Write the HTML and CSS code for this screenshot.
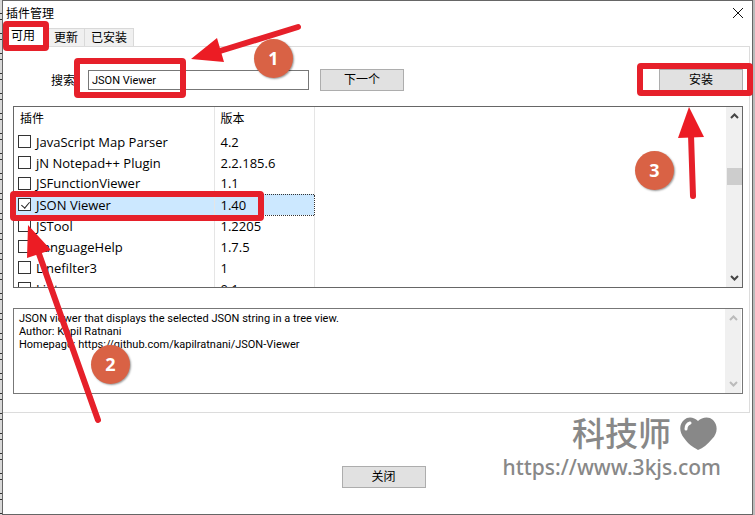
FILE: index.html
```html
<!DOCTYPE html>
<html lang="zh-CN">
<head>
    <meta charset="UTF-8">
    <meta name="viewport" content="width=device-width, initial-scale=1.0">
    <title>插件管理</title>
    <link rel="stylesheet" href="styles.css">
</head>
<body>
    <div class="dialog">
        <header class="title-bar">
            <h1>插件管理</h1>
            <button class="close-icon" aria-label="关闭窗口">
                <svg width="12" height="12" viewBox="0 0 12 12"><path d="M1 1L11 11M11 1L1 11"/></svg>
            </button>
        </header>
        <nav class="tabs">
            <button class="tab active">可用</button>
            <button class="tab">更新</button>
            <button class="tab">已安装</button>
        </nav>
        <main class="panel">
            <div class="search-row">
                <label for="search">搜索:</label>
                <input type="text" id="search" value="JSON Viewer">
                <button class="btn">下一个</button>
                <button class="btn install">安装</button>
            </div>
            <div class="list-box">
                <div class="list-view">
                    <table>
                        <thead>
                            <tr><th class="name">插件</th><th class="version">版本</th><th></th></tr>
                        </thead>
                        <tbody>
                            <tr><td><label><input type="checkbox">JavaScript Map Parser</label></td><td>4.2</td><td></td></tr>
                            <tr><td><label><input type="checkbox">jN Notepad++ Plugin</label></td><td>2.2.185.6</td><td></td></tr>
                            <tr><td><label><input type="checkbox">JSFunctionViewer</label></td><td>1.1</td><td></td></tr>
                            <tr class="selected"><td><label><input type="checkbox" checked>JSON Viewer</label></td><td>1.40</td><td></td></tr>
                            <tr><td><label><input type="checkbox">JSTool</label></td><td>1.2205</td><td></td></tr>
                            <tr><td><label><input type="checkbox">LanguageHelp</label></td><td>1.7.5</td><td></td></tr>
                            <tr><td><label><input type="checkbox">Linefilter3</label></td><td>1</td><td></td></tr>
                            <tr><td><label><input type="checkbox">Lint</label></td><td>0.1</td><td></td></tr>
                        </tbody>
                    </table>
                </div>
                <div class="scrollbar">
                    <svg width="9" height="6" viewBox="0 0 9 6"><path d="M1 5L4.500 1.500L8 5"/></svg>
                    <div class="thumb"></div>
                    <svg width="9" height="6" viewBox="0 0 9 6"><path d="M1 1L4.500 4.500L8 1"/></svg>
                </div>
            </div>
            <div class="description">
                <textarea readonly aria-label="插件说明">JSON viewer that displays the selected JSON string in a tree view.
Author: Kapil Ratnani
Homepage: https://github.com/kapilratnani/JSON-Viewer</textarea>
                <div class="scrollbar disabled">
                    <svg width="9" height="6" viewBox="0 0 9 6"><path d="M1 5L4.500 1.500L8 5"/></svg>
                    <svg width="9" height="6" viewBox="0 0 9 6"><path d="M1 1L4.500 4.500L8 1"/></svg>
                </div>
            </div>
        </main>
        <footer class="actions">
            <button class="btn">关闭</button>
        </footer>
    </div>

    <!-- step marks -->
    <svg class="marks marks-left" width="330" height="430" viewBox="0 0 330 430">
        <g class="frame">
            <rect x="6" y="24" width="40" height="24" rx="1"/>
            <rect x="77" y="61" width="106" height="34" rx="1"/>
            <rect x="13" y="194" width="248" height="24" rx="1"/>
        </g>
        <path class="shaft" d="M298 27L220 51M98 420L38 251"/>
        <path class="head" d="M191 59L217 38L224 62ZM28 225L51 250L27 258Z"/>
    </svg>
    <svg class="marks marks-right" width="120" height="210" viewBox="0 0 120 210">
        <rect class="frame" x="5" y="66" width="110" height="27" rx="1"/>
        <path class="shaft" d="M58 196L56 135"/>
        <path class="head" d="M54 107L69 137L43 138Z"/>
    </svg>
    <span class="step step-1">1</span>
    <span class="step step-2">2</span>
    <span class="step step-3">3</span>

    <div class="watermark">
        <div class="brand">
            科技师
            <svg width="37" height="34" viewBox="0 0 37 34">
                <path d="M18 4C22 0 29 -1 33 3C38 8 38 16 32 22C28 27 23 31 18 33C13 30 8 27 4 21C-1 15 -1 7 4 3C8 -1 14 0 18 4Z" fill="#888"/>
                <path d="M6 12C6 9 7 7 10 6" stroke="#fff" stroke-width="3" stroke-linecap="round" fill="none"/>
            </svg>
        </div>
        <div class="site">https://www.3kjs.com</div>
    </div>
</body>
</html>
```

FILE: styles.css
```css
* {
    box-sizing: border-box;
}
body {
    margin: 0;
    padding: 0 2px;
    min-height: 100vh;
    display: flex;
    position: relative;
    font-family: "Noto Sans", "Noto Sans CJK SC", sans-serif;
    font-size: 12px;
    color: #000;
    background:
        repeating-linear-gradient(#d8d8d8 0 13px, #333 13px 14px, #d8d8d8 14px 19px, #333 19px 20px) left / 2px 100% no-repeat,
        #bbb;
}
button, input, textarea {
    font: inherit;
    color: inherit;
}
.dialog {
    flex: 1;
    display: flex;
    flex-direction: column;
    background: #fff;
    border: 1px solid #666;
}
.title-bar {
    display: flex;
    justify-content: space-between;
    align-items: center;
    height: 24px;
    padding: 0 8px 0 3px;
}
.title-bar h1 {
    margin: 0;
    font-size: 12px;
    font-weight: normal;
}
.close-icon {
    display: flex;
    padding: 0;
    border: none;
    background: none;
}
.close-icon path {
    stroke: #111;
    fill: none;
}
.tabs {
    display: flex;
    align-items: flex-end;
    height: 21px;
    padding-left: 2px;
}
.tab {
    height: 18px;
    padding: 0 6px;
    border: 1px solid #d9d9d9;
    border-width: 1px 1px 0 0;
    background: #f0f0f0;
    line-height: 18px;
}
.tab.active {
    height: 21px;
    padding: 0 12px 0 6px;
    background: #fff;
}
.panel {
    margin-right: 2px;
    padding: 22px 6px 18px 10px;
    border: 1px solid #dcdcdc;
    border-left: none;
}
.search-row {
    display: flex;
    align-items: center;
    padding-left: 38px;
}
.search-row label {
    width: 37px;
    white-space: nowrap;
}
.search-row input {
    width: 221px;
    height: 20px;
    margin-right: 11px;
    padding: 0 3px;
    border: 1px solid #777;
    font-family: Roboto, sans-serif;
    font-size: 11px;
}
.btn {
    width: 84px;
    height: 22px;
    padding: 0;
    border: 1px solid #adadad;
    background: #e1e1e1;
    line-height: 20px;
}
.install {
    margin-left: auto;
}
.list-box {
    display: flex;
    height: 182px;
    margin-top: 15px;
    border: 1px solid #666;
}
.list-view {
    flex: 1;
    overflow: hidden;
}
table {
    width: 100%;
    border-collapse: collapse;
    table-layout: fixed;
    font-family: "Open Sans", "Noto Sans CJK SC", sans-serif;
    font-size: 13px;
}
th, td {
    height: 21px;
    padding: 0 6px;
    border-right: 1px solid #e5e5e5;
    line-height: 20px;
    font-weight: normal;
    text-align: left;
}
th {
    height: 24px;
    font-size: 12px;
}
th:last-child, td:last-child {
    border-right: none;
}
td:first-child {
    padding-left: 4px;
}
.name {
    width: 200px;
}
.version {
    width: 100px;
}
td label {
    display: flex;
    align-items: center;
    gap: 5px;
}
td input {
    appearance: none;
    position: relative;
    width: 13px;
    height: 13px;
    margin: 0;
    border: 1px solid #333;
    background: #fff;
}
td input:checked::after {
    content: "";
    position: absolute;
    left: 4px;
    top: 1px;
    width: 4px;
    height: 7px;
    border: solid #222;
    border-width: 0 1px 1px 0;
    transform: rotate(40deg);
}
.selected td:not(:last-child) {
    background: #cce8ff;
    border-top: 1px dotted #333;
    border-bottom: 1px dotted #333;
}
.selected td:nth-child(2) {
    border-right: 1px dotted #333;
}
.scrollbar {
    display: flex;
    flex-direction: column;
    justify-content: space-between;
    align-items: center;
    width: 16px;
    padding: 6px 0;
    background: #f0f0f0;
}
.scrollbar path {
    stroke: #444;
    stroke-width: 2;
    fill: none;
}
.scrollbar.disabled path {
    stroke: #bbb;
}
.thumb {
    width: 15px;
    height: 17px;
    margin-top: -42px;
    background: #cdcdcd;
}
.description {
    display: flex;
    height: 86px;
    margin-top: 20px;
    padding-right: 1px;
    border: 1px solid #777;
}
.description textarea {
    flex: 1;
    padding: 3px 5px;
    border: none;
    outline: none;
    resize: none;
    overflow: hidden;
    font-family: Roboto, sans-serif;
    font-size: 11px;
    line-height: 13px;
}
.actions {
    display: flex;
    justify-content: center;
    padding: 53px 0 25px 12px;
}
.marks {
    position: absolute;
    top: 0;
    pointer-events: none;
}
.marks-left {
    left: 0;
}
.marks-right {
    right: 0;
}
.frame {
    fill: none;
    stroke: #e6202a;
    stroke-width: 6;
}
.shaft {
    fill: none;
    stroke: #e6202a;
    stroke-width: 6;
    stroke-linecap: round;
}
.head {
    fill: #ec1c24;
}
.step {
    position: absolute;
    width: 39px;
    height: 39px;
    border-radius: 50%;
    background: #d96245;
    box-shadow: 1px 1px 2px rgba(0, 0, 0, 0.4);
    color: #fff;
    font: bold 18px/38px "Open Sans", sans-serif;
    text-align: center;
}
.step-1 {
    left: 254px;
    top: 39px;
}
.step-2 {
    left: 91px;
    top: 345px;
}
.step-3 {
    right: 81px;
    top: 151px;
}
.watermark {
    position: absolute;
    right: 34px;
    bottom: 34px;
    color: #888;
    text-align: right;
}
.brand {
    display: flex;
    justify-content: flex-end;
    align-items: center;
    gap: 9px;
    padding-right: 4px;
    font-size: 33px;
    font-weight: 500;
    line-height: 38px;
}
.site {
    font-size: 21px;
    font-weight: 500;
    line-height: 28px;
}
```
